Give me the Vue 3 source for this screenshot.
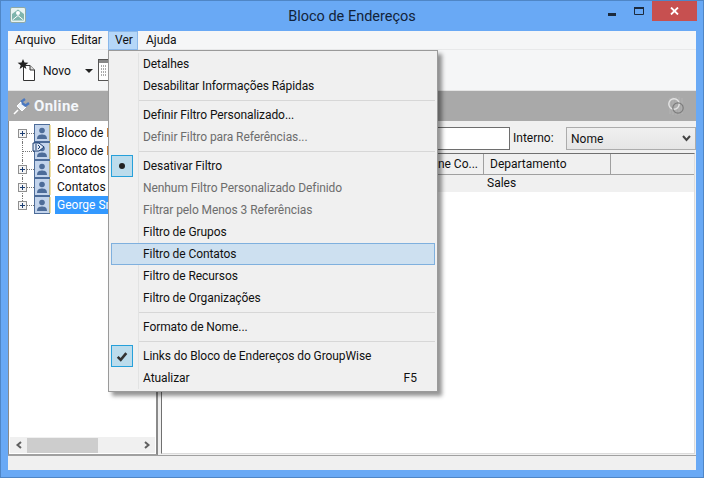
<script setup>
const tree = [
  { label: 'Bloco de Endereços', plus: true, link: false, first: true },
  { label: 'Bloco de Endereços', plus: false, link: true },
  { label: 'Contatos Frequentes', plus: true, link: false },
  { label: 'Contatos Pessoais', plus: true, link: false },
  { label: 'George Smith', plus: true, link: false, selected: true, last: true },
]
const topMenu = ['Arquivo', 'Editar', 'Ver', 'Ajuda']
const items = [
  { t: 'Detalhes' },
  { t: 'Desabilitar Informações Rápidas' },
  { sep: true },
  { t: 'Definir Filtro Personalizado...' },
  { t: 'Definir Filtro para Referências...', off: true },
  { sep: true },
  { t: 'Desativar Filtro', mark: 'dot' },
  { t: 'Nenhum Filtro Personalizado Definido', off: true },
  { t: 'Filtrar pelo Menos 3 Referências', off: true },
  { t: 'Filtro de Grupos' },
  { t: 'Filtro de Contatos', hot: true },
  { t: 'Filtro de Recursos' },
  { t: 'Filtro de Organizações' },
  { sep: true },
  { t: 'Formato de Nome...' },
  { sep: true },
  { t: 'Links do Bloco de Endereços do GroupWise', mark: 'check' },
  { t: 'Atualizar', key: 'F5' },
]
</script>

<template>
  <div class="win">
    <header class="title">
      <svg class="appicon" width="16" height="16" viewBox="0 0 16 16">
        <rect x="0.5" y="0.5" width="15" height="15" rx="1.5" fill="#e8f3f1" stroke="#8fa9a6" />
        <path d="M2 7 L8 2.5 L14 7 L14 13.5 L2 13.5 Z" fill="#7fb5ad" />
        <path d="M2.5 13 L8 8.5 L13.5 13" fill="none" stroke="#fff" />
        <circle cx="8" cy="6" r="2" fill="#fff" />
      </svg>
      <span class="title-text">Bloco de Endereços</span>
      <div class="caption">
        <svg class="cap-min" width="8" height="3" viewBox="0 0 8 3"><rect width="8" height="3" fill="#1c2a3c" /></svg>
        <svg class="cap-max" width="10" height="8" viewBox="0 0 10 8"><path d="M0.5 1 H9.5 V7.5 H0.5 Z" fill="none" stroke="#1c2a3c" /><rect width="10" height="2" fill="#1c2a3c" /></svg>
        <div class="cap-close">
          <svg width="9" height="8" viewBox="0 0 9 8"><path d="M1 0.5 L8 7.5 M8 0.5 L1 7.5" stroke="#fff" stroke-width="1.8" /></svg>
        </div>
      </div>
    </header>

    <div class="client">
      <nav class="menubar">
        <span v-for="m in topMenu" :key="m" class="top" :class="['m-' + m, { open: m === 'Ver' }]">{{ m }}</span>
      </nav>

      <div class="toolbar">
        <svg class="newicon" width="22" height="24" viewBox="0 0 22 24">
          <path d="M6.5 6.5 H13 L17.5 11 V21.5 H6.5 Z" fill="#fff" stroke="#333" />
          <path d="M13 6.5 V11 H17.5" fill="#ddd" stroke="#333" />
          <path d="M6 0 L7.5 3.6 L11.4 3.8 L8.3 6.2 L9.4 10 L6 7.8 L2.6 10 L3.7 6.2 L0.6 3.8 L4.5 3.6 Z" fill="#222" />
        </svg>
        <span class="novo">Novo</span>
        <span class="drop"></span>
        <svg class="bookicon" width="10" height="24" viewBox="0 0 10 24">
          <rect x="0.5" y="1.5" width="14" height="21" fill="#fff" stroke="#555" />
          <rect x="1" y="2" width="12" height="3" fill="#888" />
          <path d="M3 8 H8 M3 11 H8 M3 14 H8 M3 17 H8" stroke="#555" stroke-dasharray="1 1" />
        </svg>
      </div>

      <div class="banner">
        <svg width="20" height="20" viewBox="0 0 20 20">
          <path d="M2 18 L6 14" stroke="#fff" stroke-width="1.6" />
          <path d="M5 10 L10 15 L14 11 L9 6 Z" fill="#eef3f8" stroke="#fff" />
          <path d="M9 6 L13 3 M13 10 L17 7 M10 7 L14 10" stroke="#4a78c0" stroke-width="2.4" />
        </svg>
        <span>Online</span>
        <svg class="rings" width="18" height="18" viewBox="0 0 18 18">
          <path d="M3 1 V17 M6 0 V18 M9 0 V18 M12 0 V18 M15 1 V17" stroke="#bdbdbd" stroke-width="0.6" />
          <circle cx="7" cy="7" r="5.2" fill="none" stroke="#e4e4e4" stroke-width="1.4" />
          <circle cx="11" cy="11" r="5.2" fill="none" stroke="#7c7c7c" stroke-width="1.2" />
        </svg>
      </div>

      <div class="main">
        <aside class="left">
          <div class="tree">
            <div v-for="(n, i) in tree" :key="i" class="node" :class="{ first: n.first, last: n.last }">
              <span class="exp">
                <span v-if="n.plus" class="plus"></span>
              </span>
              <span class="dots" :class="{ long: !n.plus }"></span>
              <svg class="person" width="18" height="18" viewBox="0 0 18 18">
                <rect x="0.5" y="0.5" width="15" height="17" fill="#c3d4ec" stroke="#4d6c99" />
                <path d="M16 1 V17" stroke="#e8d27a" stroke-width="1.4" />
                <circle cx="8" cy="6.5" r="2.8" fill="#4d6c99" />
                <path d="M3 15 C3 11 6 10.5 8 10.5 C10 10.5 13 11 13 15 Z" fill="#4d6c99" />
                <g v-if="n.link">
                  <path d="M-1 1 H5 L10 5 L5 9 H-1 Z" fill="#dfe8f5" stroke="#1d3f73" />
                  <path d="M1 3 H3 M1 5 H3 M1 7 H3 M4 3 L6 5 L4 7" fill="none" stroke="#1d3f73" />
                </g>
              </svg>
              <span class="label" :class="{ sel: n.selected }">{{ n.label }}</span>
            </div>
          </div>
          <div class="hscroll">
            <svg width="8" height="8" viewBox="0 0 8 8" class="arr"><path d="M6 1 L2.5 4 L6 7" fill="none" stroke="#606060" stroke-width="2" /></svg>
            <div class="hthumb"></div>
            <svg width="8" height="8" viewBox="0 0 8 8" class="arr r"><path d="M2 1 L5.5 4 L2 7" fill="none" stroke="#606060" stroke-width="2" /></svg>
          </div>
        </aside>

        <section class="right">
          <div class="filters">
            <div class="search"></div>
            <span class="int">Interno:</span>
            <div class="select">
              <span>Nome</span>
              <svg width="9" height="7" viewBox="0 0 9 7"><path d="M1 1 L4.5 5 L8 1" fill="none" stroke="#444" stroke-width="2" /></svg>
            </div>
          </div>
          <div class="grid">
            <div class="thead">
              <div class="c1">ne Co...</div>
              <div class="c2">Departamento</div>
              <div class="c3"></div>
            </div>
            <div class="trow"><span>Sales</span></div>
          </div>
        </section>
      </div>

      <footer class="status"></footer>

      <div class="menu">
        <template v-for="(it, i) in items" :key="i">
          <div v-if="it.sep" class="sep"></div>
          <div v-else class="item" :class="{ off: it.off, hot: it.hot }">
            <span class="gut">
              <span v-if="it.mark" class="markbox">
                <span v-if="it.mark === 'dot'" class="dot"></span>
                <svg v-else width="12" height="11" viewBox="0 0 14 12"><path d="M2 6.5 L5.5 10 L12 2" fill="none" stroke="#333" stroke-width="3" /></svg>
              </span>
            </span>
            <span class="txt">{{ it.t }}</span>
            <span v-if="it.key" class="key">{{ it.key }}</span>
          </div>
        </template>
      </div>
    </div>
  </div>
</template>

<style scoped>
.win {
  width: 704px;
  height: 478px;
  box-sizing: border-box;
  background: #69a9f5;
  border: 1px solid #4f86c6;
  display: flex;
  flex-direction: column;
  font-family: Roboto, "Noto Sans", sans-serif;
  font-size: 12px;
  color: #111;
  overflow: hidden;
}
.title {
  height: 30px;
  flex: none;
  position: relative;
  display: flex;
  align-items: center;
  justify-content: center;
}
.appicon { position: absolute; left: 9px; top: 6px; }
.title-text { font-size: 14.5px; color: #12233a; }
.caption {
  position: absolute;
  right: 6px;
  top: 0;
  display: flex;
  align-items: center;
  height: 20px;
}
.cap-min { margin-right: 18px; margin-top: 6px; }
.cap-max { margin-right: 8px; margin-top: -1px; }
.cap-close {
  width: 45px;
  height: 20px;
  background: #c75050;
  display: flex;
  align-items: center;
  justify-content: center;
}
.client {
  position: relative;
  margin: 0 7px 7px;
  flex: 1;
  display: flex;
  flex-direction: column;
  background: #f0f0f0;
  min-height: 0;
}
.menubar {
  height: 19px;
  flex: none;
  display: flex;
  background: #f5f6f7;
  border-bottom: 1px solid #e8e9ea;
  box-sizing: border-box;
}
.top { padding-left: 7px; line-height: 18px; box-sizing: border-box; height: 19px; }
.m-Arquivo { width: 56px; }
.m-Editar { width: 44px; }
.m-Ver { width: 30px; margin-right: 1px; }
.m-Ajuda { width: 44px; }
.open {
  background: #b5d7f8;
  box-shadow: inset 0 0 0 1px #8ab8ea;
}
.toolbar {
  height: 41px;
  flex: none;
  display: flex;
  align-items: center;
  background: #f5f6f7;
  padding-left: 9px;
  box-sizing: border-box;
  border-bottom: 1px solid #e4e4e4;
}
.newicon { margin-top: 2px; }
.novo { margin-left: 4px; margin-top: 1px; width: 29px; }
.drop {
  width: 0;
  height: 0;
  border-left: 4px solid transparent;
  border-right: 4px solid transparent;
  border-top: 4px solid #222;
  margin-left: 13px;
  margin-top: 1px;
}
.bookicon { margin-left: 5px; }
.banner {
  height: 30px;
  flex: none;
  background: #a9a9a9;
  display: flex;
  align-items: center;
  padding-left: 4px;
  position: relative;
  font-size: 15px;
  font-weight: 700;
  letter-spacing: 0.3px;
  color: #f4f7fb;
}
.banner span { margin-left: 2px; }
.rings { position: absolute; right: 11px; top: 6px; }
.main { flex: 1; display: flex; min-height: 0; }
.left {
  width: 150px;
  flex: none;
  box-sizing: border-box;
  background: #fff;
  border-left: 1px solid #8a8a8a;
  border-bottom: 1px solid #a0a0a0;
  border-right: 2px solid #8a8a8a;
  display: flex;
  flex-direction: column;
  margin-right: 3px;
}
.tree { flex: 1; padding-top: 3px; overflow: hidden; }
.node { height: 18px; display: flex; align-items: center; position: relative; white-space: nowrap; }
.node::before {
  content: "";
  position: absolute;
  left: 13px;
  top: 0;
  bottom: 0;
  border-left: 1px dotted #777;
}
.node.first::before { top: 9px; }
.node.last::before { bottom: 9px; }
.exp { width: 9px; height: 9px; margin-left: 9px; flex: none; position: relative; z-index: 1; }
.plus {
  position: absolute;
  inset: 0;
  border: 1px solid #8f8f8f;
  background:
    linear-gradient(#1d3f73, #1d3f73) center/5px 1px no-repeat,
    linear-gradient(#1d3f73, #1d3f73) center/1px 5px no-repeat,
    #f4f4f4;
  box-sizing: border-box;
}
.dots { width: 7px; border-top: 1px dotted #777; flex: none; }
.dots.long { margin-left: -5px; width: 12px; }
.person { flex: none; margin-right: 3px; overflow: visible; }
.label { padding: 0 2px; line-height: 18px; }
.label.sel { background: #3399ff; color: #fff; width: 70px; }
.hscroll {
  height: 16px;
  flex: none;
  background: #f0f0f0;
  margin: 0 1px 1px;
  display: flex;
  align-items: center;
  padding-left: 5px;
}
.arr { flex: none; }
.arr.r { margin-left: auto; margin-right: 4px; }
.hthumb { width: 71px; height: 15px; background: #cdcdcd; margin-left: 4px; }
.right { flex: 1; display: flex; flex-direction: column; min-width: 0; }
.filters {
  height: 32px;
  flex: none;
  display: flex;
  align-items: flex-start;
  padding: 6px 0 0 100px;
  box-sizing: border-box;
}
.search {
  flex: none;
  width: 249px;
  height: 23px;
  background: #fff;
  border: 1px solid #6e6e6e;
  box-sizing: border-box;
}
.int { margin-left: 3px; width: 53px; line-height: 23px; }
.select {
  width: 130px;
  height: 23px;
  box-sizing: border-box;
  border: 1px solid #acacac;
  background: linear-gradient(#f0f0f0, #e5e5e5);
  display: flex;
  align-items: center;
  justify-content: space-between;
  padding: 0 4px;
}
.grid {
  flex: 1;
  background: #fff;
  border-top: 1px solid #707070;
  border-left: 1px solid #707070;
  border-right: 1px solid #dcdcdc;
  border-bottom: 1px solid #dcdcdc;
  margin-right: 1px;
  margin-bottom: 1px;
}
.thead {
  height: 21px;
  display: flex;
  background: #f0f0f0;
  border-bottom: 1px solid #a0a0a0;
  box-sizing: border-box;
  line-height: 20px;
}
.c1 { width: 322px; text-align: right; padding-right: 5px; box-sizing: border-box; border-right: 1px solid #a0a0a0; }
.c2 { width: 127px; padding-left: 6px; box-sizing: border-box; border-right: 1px solid #a0a0a0; }
.c3 { flex: 1; }
.trow { height: 17px; background: #f0f0f0; padding-left: 325px; line-height: 17px; }
.status { height: 15px; flex: none; background: #f0f0f0; border-top: 1px solid #a0a0a0; box-sizing: border-box; }
.menu {
  position: absolute;
  left: 100px;
  top: 19px;
  width: 330px;
  height: 342px;
  box-sizing: border-box;
  background: #f0f0f0;
  border: 1px solid #9a9a9a;
  padding: 2px 2px 1px;
  box-shadow: 4px 4px 4px rgba(0, 0, 0, 0.42);
  z-index: 5;
}
.menu::before {
  content: "";
  position: absolute;
  left: 29px;
  top: 2px;
  bottom: 2px;
  width: 1px;
  background: #e2e3e3;
}
.item {
  height: 22px;
  display: flex;
  align-items: center;
  box-sizing: border-box;
  position: relative;
}
.item.hot {
  background: #cde0f0;
  box-shadow: inset 0 0 0 1px #7fb0de;
}
.off { color: #6d6d6d; }
.gut {
  width: 32px;
  flex: none;
  display: flex;
  justify-content: flex-start;
}
.markbox {
  width: 22px;
  height: 22px;
  box-sizing: border-box;
  background: #bcdcec;
  border: 1px solid #26a0da;
  display: flex;
  align-items: center;
  justify-content: center;
}
.dot { width: 6px; height: 6px; border-radius: 50%; background: #222; }
.txt { white-space: nowrap; letter-spacing: -0.08px; }
.key { margin-left: auto; margin-right: 18px; }
.sep { height: 1px; background: #d7d7d7; margin: 3px 0 3px 28px; }
</style>
